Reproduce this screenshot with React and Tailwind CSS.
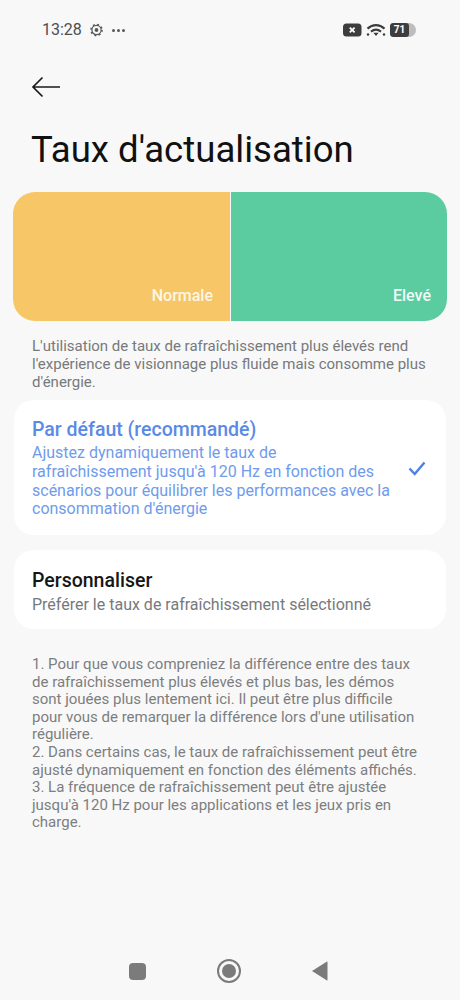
import React from "react";

const F = { fontFamily: "Roboto, sans-serif" };

function Gear() {
  return (
    <svg width="13" height="14" viewBox="0 0 13 14" fill="none">
      <circle cx="6.5" cy="7" r="4.6" stroke="#55595c" strokeWidth="1.2" />
      <circle cx="6.5" cy="7" r="5.6" stroke="#55595c" strokeWidth="1.5" strokeDasharray="1.9 2.5" />
      <circle cx="6.5" cy="7" r="1.9" fill="#55595c" />
    </svg>
  );
}

function StatusIcons() {
  return (
    <div className="flex items-center gap-[4px]">
      <svg width="19" height="14" viewBox="0 0 19 14">
        <rect x="0" y="0.5" width="18.5" height="13" rx="3.5" fill="#3d3d3f" />
        <path d="M6.8 4.6l4.8 4.8M11.6 4.6 6.8 9.4" stroke="#fff" strokeWidth="1.8" />
      </svg>
      <svg width="20" height="14" viewBox="0 0 20 14" fill="none" stroke="#3d3d3f" strokeWidth="2.2">
        <path d="M1.5 5.6C6.5 .9 13.5 .9 18.5 5.6" />
        <path d="M5 8.6C8 6.2 12 6.2 15 8.6" />
        <path d="M7.4 9.8h5.2L10 13z" fill="#3d3d3f" stroke="none" />
        <circle cx="2" cy="11.5" r="1.2" fill="#3d3d3f" stroke="none" />
        <circle cx="18" cy="11.5" r="1.2" fill="#3d3d3f" stroke="none" />
      </svg>
      <div className="relative flex h-[14px] w-[26px] overflow-hidden rounded-[3px] rounded-r-[7px] bg-[#bdbdbd]">
        <div className="flex h-full w-[19px] items-center justify-center rounded-[3px] bg-[#3d3d3f] text-[10px] font-bold leading-none text-white">
          71
        </div>
      </div>
    </div>
  );
}

export default function App() {
  return (
    <div style={F} className="flex h-[1000px] w-[460px] flex-col overflow-hidden bg-[#f8f8f8]">
      <div className="flex h-[60px] items-center justify-between pl-[42px] pr-[44px]">
        <div className="flex items-center gap-[8px]">
          <span className="text-[16px] leading-none text-[#4b4f52]">13:28</span>
          <Gear />
          <span className="ml-[1px] flex gap-[2px]">
            <i className="h-[3px] w-[3px] rounded-full bg-[#55595c]" />
            <i className="h-[3px] w-[3px] rounded-full bg-[#55595c]" />
            <i className="h-[3px] w-[3px] rounded-full bg-[#55595c]" />
          </span>
        </div>
        <StatusIcons />
      </div>

      <div className="flex h-[54px] items-center pl-[31px]">
        <svg width="30" height="22" viewBox="0 0 30 22" fill="none" stroke="#1a1a1a" strokeWidth="1.7">
          <path d="M29 11H2M11.5 1.5 2 11l9.5 9.5" />
        </svg>
      </div>

      <h1 className="mt-[13px] pl-[31px] text-[36.6px] font-normal leading-[46px] text-[#111111]">
        Taux d'actualisation
      </h1>

      <div className="mx-[13px] mt-[19px] flex h-[129px] overflow-hidden rounded-[22px]">
        <div className="flex w-[217px] items-end justify-end bg-[#f6c667] pb-[16px] pr-[17px] text-[16px] font-medium leading-[18px] text-[#fdf6e6]">
          Normale
        </div>
        <div className="w-px bg-[#f8f8f8]" />
        <div className="flex flex-1 items-end justify-end bg-[#5bcca0] pb-[16px] pr-[16px] text-[16px] font-medium leading-[18px] text-[#eefaf5]">
          Elevé
        </div>
      </div>

      <p className="mt-[16px] pl-[32px] pr-[32px] text-[15px] leading-[18px] text-[#77797b]">
        L'utilisation de taux de rafraîchissement plus élevés rend l'expérience de visionnage plus fluide mais consomme plus d'énergie.
      </p>

      <div className="mx-[14px] mt-[9px] flex h-[135px] items-center rounded-[20px] bg-white pl-[18px] pr-[20px] pt-[2px]">
        <div className="min-w-0 flex-1">
          <div className="text-[19.5px] font-medium leading-[24px] text-[#5a8ae6]">Par défaut (recommandé)</div>
          <div className="mt-[2px] w-[362px] text-[16px] leading-[18.6px] text-[#6f9bec]">
            Ajustez dynamiquement le taux de rafraîchissement jusqu'à 120 Hz en fonction des scénarios pour équilibrer les performances avec la consommation d'énergie
          </div>
        </div>
        <svg width="18" height="15" viewBox="0 0 18 15" fill="none" stroke="#4f83e3" strokeWidth="2.5">
          <path d="M1.5 7.5 6.7 13 16.5 1.5" />
        </svg>
      </div>

      <div className="mx-[14px] mt-[15px] flex h-[79px] flex-col justify-center rounded-[20px] bg-white pl-[18px] pt-[3px]">
        <div className="text-[19.5px] font-medium leading-[24px] text-[#161616]">Personnaliser</div>
        <div className="mt-[3px] text-[16px] leading-[18px] text-[#77797b]">Préférer le taux de rafraîchissement sélectionné</div>
      </div>

      <div className="mt-[27px] pl-[32px] pr-[38px] text-[15px] leading-[17.6px] text-[#7c7e80]">
        <p>1. Pour que vous compreniez la différence entre des taux de rafraîchissement plus élevés et plus bas, les démos sont jouées plus lentement ici. Il peut être plus difficile pour vous de remarquer la différence lors d'une utilisation régulière.</p>
        <p>2. Dans certains cas, le taux de rafraîchissement peut être ajusté dynamiquement en fonction des éléments affichés.</p>
        <p>3. La fréquence de rafraîchissement peut être ajustée jusqu'à 120 Hz pour les applications et les jeux pris en charge.</p>
      </div>

      <div className="mt-auto flex h-[58px] items-start pt-[17px]">
        <div className="ml-[129px] mt-[4px] h-[17px] w-[17px] rounded-[4px] bg-[#7b7b7b]" />
        <div className="ml-[71px] flex h-[24px] w-[24px] items-center justify-center rounded-full border-2 border-[#7b7b7b]">
          <div className="h-[14px] w-[14px] rounded-full bg-[#7b7b7b]" />
        </div>
        <svg className="ml-[70px] mt-[2px]" width="17" height="20" viewBox="0 0 17 20">
          <path d="M16.5 1v18a.5.5 0 0 1-.5.5L1 10 16 .5a.5.5 0 0 1 .5.5z" fill="#7b7b7b" />
        </svg>
      </div>
    </div>
  );
}
